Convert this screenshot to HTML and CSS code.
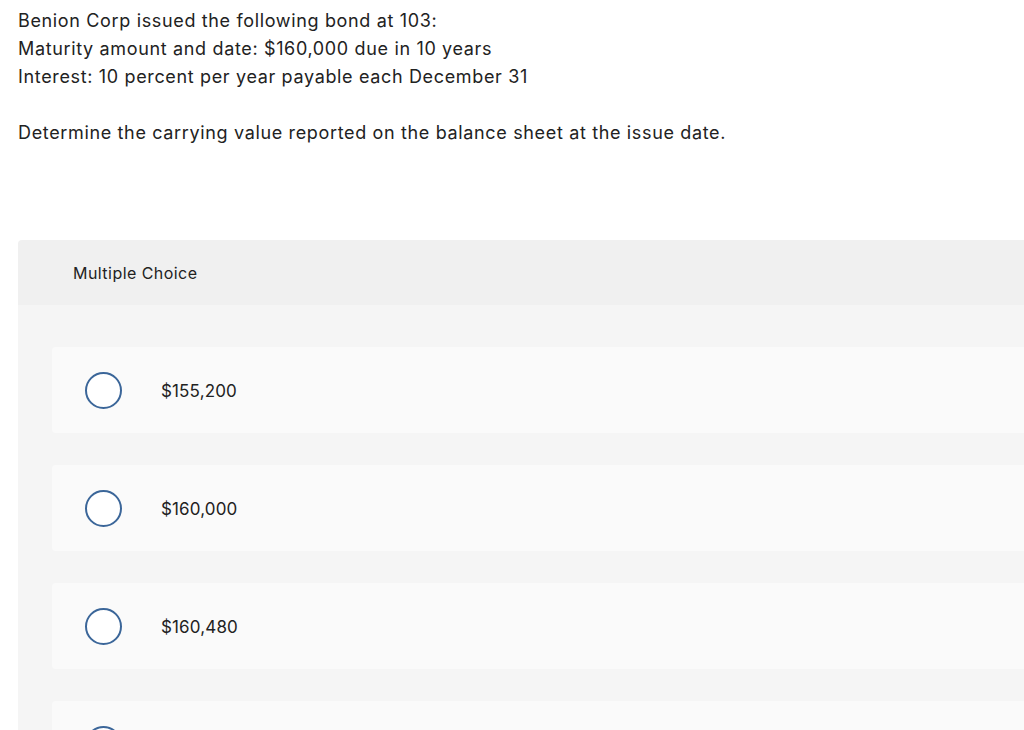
FILE: index.html
```html
<!DOCTYPE html>
<html>
<head>
<meta charset="utf-8">
<link rel="stylesheet" href="styles.css">
</head>
<body>
<div class="question">
  <p class="line">Benion Corp issued the following bond at 103:</p>
  <p class="line">Maturity amount and date: $160,000 due in 10 years</p>
  <p class="line">Interest: 10 percent per year payable each December 31</p>
  <p class="line blank">&nbsp;</p>
  <p class="line">Determine the carrying value reported on the balance sheet at the issue date.</p>
</div>
<div class="panel">
  <div class="panel-head">Multiple Choice</div>
  <div class="panel-body">
    <div class="option"><span class="radio"></span><span class="label">$155,200</span></div>
    <div class="option"><span class="radio"></span><span class="label">$160,000</span></div>
    <div class="option"><span class="radio"></span><span class="label">$160,480</span></div>
    <div class="option"><span class="radio"></span><span class="label">$164,800</span></div>
  </div>
</div>
</body>
</html>
```
FILE: styles.css
```css
html, body {
  margin: 0;
  padding: 0;
  background: #ffffff;
  overflow: hidden;
}
body {
  font-family: "Inter", "Open Sans", sans-serif;
  color: #222222;
  width: 1024px;
  height: 730px;
}
.question {
  padding: 7px 0 0 18px;
}
.line {
  margin: 0;
  font-size: 18px;
  line-height: 28px;
  letter-spacing: 0.65px;
}
.panel {
  margin: 93px 0 0 18px;
  border-top-left-radius: 4px;
  overflow: hidden;
}
.panel-head {
  background: #f0f0f0;
  height: 65px;
  display: flex;
  align-items: center;
  padding-left: 55px;
  font-size: 16px;
  letter-spacing: 0.45px;
  color: #222222;
}
.panel-body {
  background: #f5f5f5;
  padding: 42px 0 0 34px;
  display: flex;
  flex-direction: column;
  gap: 32px;
}
.option {
  background: #fafafa;
  height: 86px;
  border-radius: 4px 0 0 4px;
  display: flex;
  align-items: center;
  padding-left: 33px;
  flex-shrink: 0;
}
.radio {
  width: 33px;
  height: 33px;
  border: 2px solid #3b6699;
  border-radius: 50%;
  background: #ffffff;
  flex-shrink: 0;
}
.label {
  margin-left: 39px;
  padding-top: 2px;
  font-size: 17px;
  letter-spacing: 0.15px;
  color: #222222;
}
```
